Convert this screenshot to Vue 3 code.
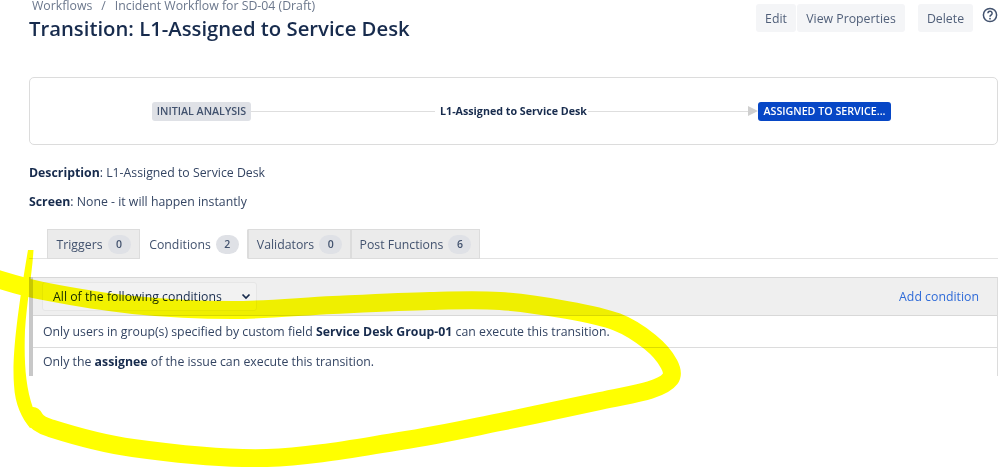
<script setup>
const tabs = [
  { name: 'Triggers', count: 0, width: 93 },
  { name: 'Conditions', count: 2, width: 108, active: true },
  { name: 'Validators', count: 0, width: 103 },
  { name: 'Post Functions', count: 6, width: 129 },
]

// Freehand highlighter stroke: Catmull-Rom spline through the sampled points.
const points = [
  [-6, 278], [43, 291], [133, 305], [233, 310], [333, 305], [430, 301], [500, 301], [567, 310],
  [617, 322], [650, 342], [669, 364], [670, 379], [650, 390], [600, 401], [500, 422], [400, 441],
  [267, 458], [133, 448], [50, 428], [33, 416],
]
const f = (n) => n.toFixed(1)
const strokePath = points.reduce((d, p, i) => {
  if (i === 0) return `M${p[0]} ${p[1]}`
  const a = points[i - 2] || points[i - 1]
  const b = points[i - 1]
  const c = points[i + 1] || p
  return `${d} C${f(b[0] + (p[0] - a[0]) / 6)} ${f(b[1] + (p[1] - a[1]) / 6)} ${f(p[0] - (c[0] - b[0]) / 6)} ${f(p[1] - (c[1] - b[1]) / 6)} ${p[0]} ${p[1]}`
}, '')
</script>

<template>
  <div class="page">
    <header class="head">
      <div>
        <nav class="crumbs"><span>Workflows</span><span class="sep">/</span><span>Incident Workflow for SD-04 (Draft)</span></nav>
        <h1>Transition: L1-Assigned to Service Desk</h1>
      </div>
      <div class="actions">
        <button class="btn edit">Edit</button>
        <button class="btn view">View Properties</button>
        <button class="btn del">Delete</button>
        <svg class="help" width="16" height="16" viewBox="0 0 16 16" fill="none" stroke="#42526e">
          <circle cx="8" cy="8" r="6.6" stroke-width="1.5" />
          <path d="M5.9 6.3a2.1 2.1 0 1 1 3.3 1.7c-.8.5-1.2.9-1.2 1.7" stroke-width="1.5" />
          <circle cx="8" cy="11.7" r=".9" fill="#42526e" stroke="none" />
        </svg>
      </div>
    </header>

    <section class="diagram">
      <span class="node grey">INITIAL ANALYSIS</span>
      <span class="line first"></span>
      <span class="label">L1-Assigned to Service Desk</span>
      <span class="line second"></span>
      <span class="arrow"></span>
      <span class="node blue">ASSIGNED TO SERVICE...</span>
    </section>

    <p class="meta first-meta"><b>Description</b>: L1-Assigned to Service Desk</p>
    <p class="meta second-meta"><b>Screen</b>: None - it will happen instantly</p>

    <div class="tabs">
      <div v-for="t in tabs" :key="t.name" class="tab" :class="{ active: t.active }" :style="{ width: t.width + 'px' }">
        <span>{{ t.name }}</span><span class="count">{{ t.count }}</span>
      </div>
    </div>

    <section class="panel">
      <div class="bar">
        <div class="select">
          <span>All of the following conditions</span>
          <svg width="10" height="7" viewBox="0 0 10 7" fill="none" stroke="#172b4d" stroke-width="1.7"><path d="M1.5 1.5 5 5l3.5-3.5" /></svg>
        </div>
        <a class="add">Add condition</a>
      </div>
      <div class="row one">Only users in group(s) specified by custom field <b>Service Desk Group-01</b> can execute this transition.</div>
      <div class="row two">Only the <b>assignee</b> of the issue can execute this transition.</div>
    </section>

    <svg class="marker" width="999" height="467" viewBox="0 0 999 467" fill="none">
      <path :d="strokePath" stroke="#ffff00" stroke-width="18" stroke-linecap="round" stroke-linejoin="round" />
      <path d="M28 250 L33.5 250 C32 275 27 300 25 330 C24 360 25 385 33 408 L42 422 L30 428 C22 418 15 405 14 385 C12 360 16 320 28 250 Z" fill="#ffff00" />
    </svg>
  </div>
</template>

<style>
html, body { background: #fff; overflow: hidden; }
</style>

<style scoped>
.page { position: relative; width: 999px; height: 467px; overflow: hidden; box-sizing: border-box; padding-left: 29px; font-family: "Open Sans", "Noto Sans", sans-serif; color: #172b4d; font-size: 12.3px; }
.head { display: flex; justify-content: space-between; height: 77px; }
.crumbs { display: flex; margin-top: -1px; padding-left: 3px; line-height: 13px; color: #6b778c; }
.sep { margin: 0 9px; }
h1 { margin: 1px 0 0; font-size: 20.3px; line-height: 30px; font-weight: 600; color: #172b4d; }
.actions { display: flex; align-items: flex-start; padding-top: 4px; padding-right: 1px; }
.btn { height: 28px; padding: 0; border: 0; border-radius: 3px; background: #f4f5f7; color: #505f79; font: 12.3px "Open Sans", sans-serif; }
.edit { width: 40px; }
.view { width: 108px; margin-left: 1px; }
.del { width: 55px; margin-left: 13px; }
.help { margin: 3px 0 0 9px; }
.diagram { box-sizing: border-box; width: 969px; height: 68px; border: 1px solid #dcdcdc; border-radius: 5px; display: flex; align-items: center; padding-left: 122px; }
.node { box-sizing: border-box; height: 19px; line-height: 19px; border-radius: 3px; text-align: center; font-size: 10.7px; font-weight: 600; white-space: nowrap; }
.grey { width: 99px; background: #dfe1e6; color: #42526e; }
.blue { width: 133px; background: #0747c6; color: #fff; }
.line { height: 1px; background: #dedede; }
.first { width: 184px; }
.second { width: 160px; }
.label { width: 153px; padding-left: 5px; box-sizing: border-box; font-size: 10.7px; font-weight: 700; white-space: nowrap; }
.arrow { width: 0; height: 0; border-left: 10px solid #cfcfcf; border-top: 5px solid transparent; border-bottom: 5px solid transparent; }
.meta { margin: 0; line-height: 18px; color: #344563; }
.meta b { color: #172b4d; font-weight: 700; }
.first-meta { margin-top: 19px; }
.second-meta { margin-top: 11px; }
.tabs { display: flex; box-sizing: border-box; width: 969px; height: 30px; margin-top: 18px; padding-left: 18px; border-bottom: 1px solid #e3e3e3; }
.tab { box-sizing: border-box; height: 30px; display: flex; align-items: center; justify-content: center; gap: 5px; background: #ebebeb; border: 1px solid #dcdcdc; color: #42526e; }
.tab.active { background: #fff; border-color: #fff #dcdcdc #fff #fff; }
.count { width: 23px; height: 19px; line-height: 19px; text-align: center; border-radius: 10px; background: #dfe1e6; font-size: 10.5px; font-weight: 600; }
.panel { box-sizing: border-box; width: 969px; margin-top: 18px; border-left: 4px solid #c8c8c8; border-right: 1px solid #dcdcdc; }
.bar { box-sizing: border-box; height: 39px; background: #efefef; border-top: 1px solid #d8d8d8; border-bottom: 1px solid #d8d8d8; display: flex; align-items: center; justify-content: space-between; padding: 0 18px 0 9px; }
.select { box-sizing: border-box; width: 215px; height: 29px; display: flex; align-items: center; justify-content: space-between; padding: 0 5px 0 10px; border: 1px solid #e6e6e6; border-radius: 3px; background: #f2f2f2; }
.add { color: #2f6bd8; }
.row { padding-left: 10px; color: #344563; white-space: nowrap; }
.row b { color: #172b4d; font-weight: 700; }
.one { height: 31px; line-height: 31px; border-bottom: 1px solid #dcdcdc; }
.two { height: 28px; line-height: 28px; }
.marker { position: absolute; left: 0; top: 0; mix-blend-mode: multiply; pointer-events: none; }
</style>
